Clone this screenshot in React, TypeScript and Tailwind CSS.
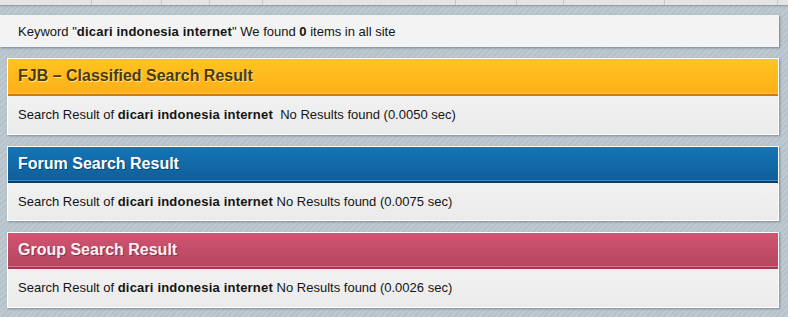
import React from 'react';

const font = { fontFamily: '"Liberation Sans", Arial, sans-serif' };

const tabs = [92, 70, 48, 53, 193, 61, 47, 101, 113];

type Section = {
  title: string;
  time: string;
  gap?: boolean;
  head: string;
  line: string;
  bar: string;
  text: string;
  headH: string;
  bodyH: string;
};

const sections: Section[] = [
  {
    title: 'FJB – Classified Search Result',
    time: '0.0050',
    gap: true,
    head: 'bg-gradient-to-b from-[#ffc41f] to-[#feb019]',
    line: 'bg-[#f7c04a]',
    bar: 'bg-[#d2780f]',
    text: 'text-[#4b3a08] [text-shadow:1px_1px_0_#ffe48c]',
    headH: 'h-[34px]',
    bodyH: 'h-[38px]',
  },
  {
    title: 'Forum Search Result',
    time: '0.0075',
    head: 'bg-gradient-to-b from-[#1575b6] to-[#105f9a]',
    line: 'bg-[#3b8ccb]',
    bar: 'bg-[#0b3e66]',
    text: 'text-white [text-shadow:1px_1px_0_#0b4470]',
    headH: 'h-[33px]',
    bodyH: 'h-[37px]',
  },
  {
    title: 'Group Search Result',
    time: '0.0026',
    head: 'bg-gradient-to-b from-[#d15572] to-[#b6465f]',
    line: 'bg-[#d9728b]',
    bar: 'bg-[#a13a55]',
    text: 'text-[#fdf0f3] [text-shadow:1px_1px_0_#8e2f47]',
    headH: 'h-[33px]',
    bodyH: 'h-[38px]',
  },
];

function ResultCard({ s }: { s: Section }) {
  return (
    <div className="ml-[7px] w-[772px] border border-white bg-white shadow-[1px_1px_2px_rgba(60,70,80,0.45)]">
      <div className={`${s.headH} ${s.head} flex items-center pl-[10px]`}>
        <h2 className={`text-[16px] font-bold ${s.text}`}>{s.title}</h2>
      </div>
      <div className={`h-px ${s.line}`}></div>
      <div className={`h-[2px] ${s.bar}`}></div>
      <div
        className={`${s.bodyH} bg-gradient-to-b from-[#f1f1f1] to-[#ebebeb] flex items-center pl-[10px] text-[13px] text-[#141414]`}
      >
        <span>
          Search Result of <b className="tracking-[0.2px]">dicari indonesia internet</b>
          {s.gap ? '\u00a0 ' : ' '}No Results found ({s.time} sec)
        </span>
      </div>
    </div>
  );
}

export default function App() {
  return (
    <div
      style={font}
      className="h-[317px] w-[788px] overflow-hidden bg-[#b9c5cd] bg-[repeating-linear-gradient(135deg,#b6c2ca_0px,#b6c2ca_2px,#bec9d1_2px,#bec9d1_4px)]"
    >
      {/* top nav strip */}
      <div className="flex h-[5px] bg-[#e4e4e4] shadow-[0_1px_2px_rgba(0,0,0,0.25)]">
        {tabs.map((w, i) => (
          <div key={i} style={{ width: w }} className="h-full border-r border-[#c8c8c8]"></div>
        ))}
      </div>

      {/* keyword summary */}
      <div className="mt-[10px] flex h-[32px] w-[779px] items-center bg-[#f3f3f3] pl-[18px] pt-px text-[13px] text-[#141414] shadow-[1px_1px_2px_rgba(60,70,80,0.5)]">
        <span>
          Keyword "<b className="tracking-[0.2px]">dicari indonesia internet</b>" We found <b>0</b> items in all site
        </span>
      </div>

      <div className="mt-[11px] flex flex-col gap-[11px]">
        {sections.map((s) => (
          <ResultCard key={s.title} s={s} />
        ))}
      </div>
    </div>
  );
}
